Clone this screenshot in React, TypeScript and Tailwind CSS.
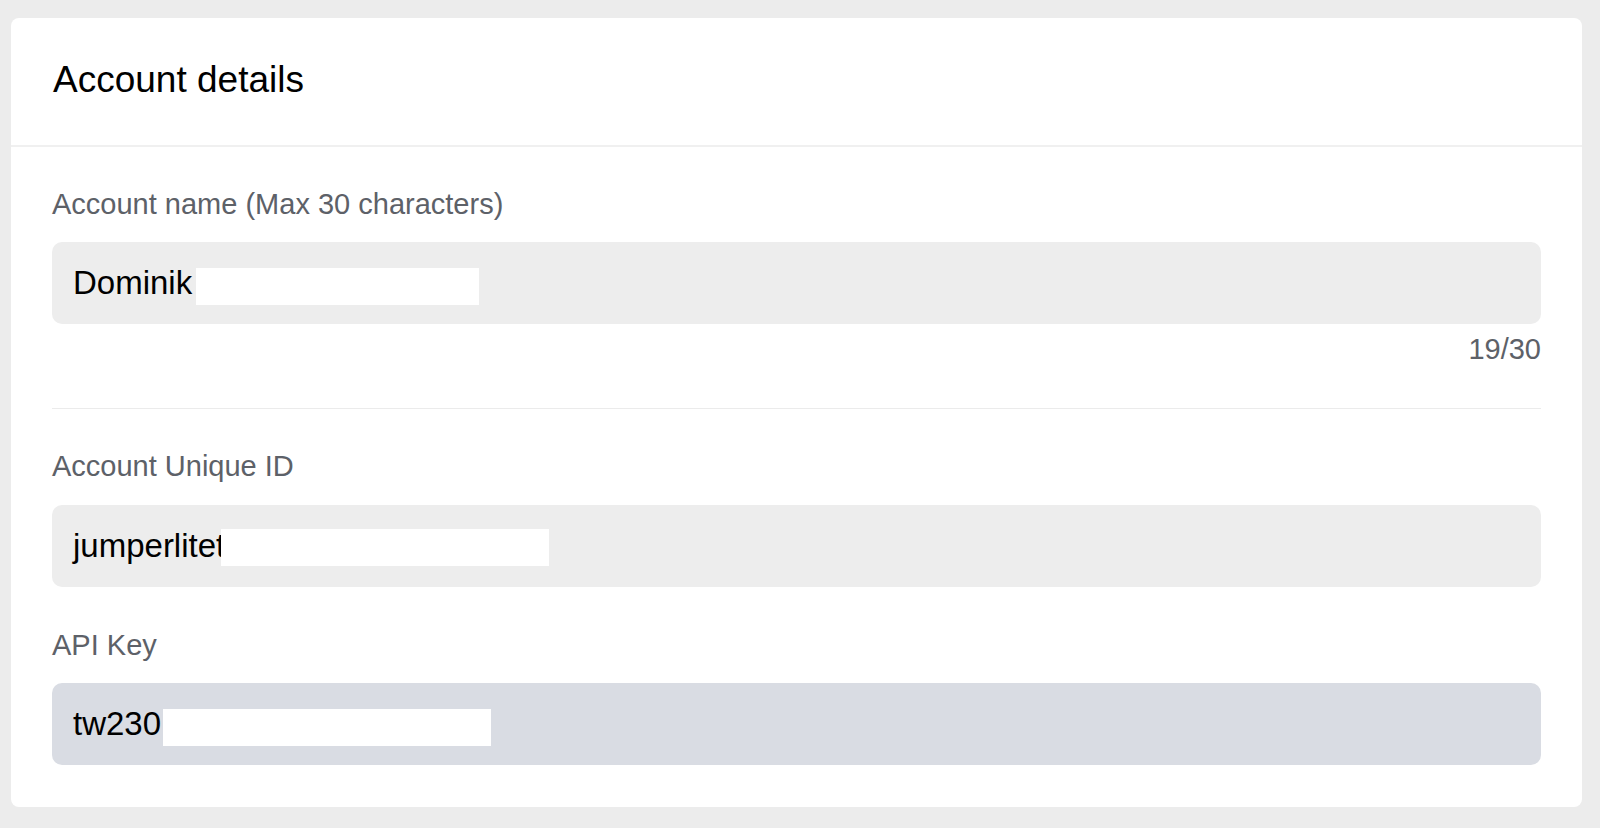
export default function App() {
  return (
    <div className="min-h-screen w-full bg-[#ececec] pl-[11px] pr-[18px] pt-[18px] pb-[21px] font-['Liberation_Sans',Arial,sans-serif]">
      <div className="bg-white rounded-[8px]">
        {/* Header */}
        <header className="px-[42px] pt-[35px] pb-[38px] border-b-2 border-[#f0f0f0]">
          <h1 className="text-[37px] leading-[54px] text-black font-normal">Account details</h1>
        </header>

        {/* Body */}
        <div className="px-[41px] pt-[36px] pb-[42px]">
          <label className="block text-[29px] leading-[42px] text-[#5d6168]">
            Account name (Max 30 characters)
          </label>
          <div className="relative mt-[17px] h-[82px] rounded-[10px] bg-[#ededed] pl-[21px] flex items-center">
            <span className="text-[33px] text-black">Dominik</span>
            <span className="absolute left-[144px] top-[26px] w-[283px] h-[37px] bg-white" />
          </div>
          <div className="mt-[4px] text-right text-[29px] leading-[42px] text-[#5d6168]">19/30</div>

          <div className="mt-[38px] h-px bg-[#ebebeb]" />

          <label className="block mt-[36px] text-[29px] leading-[42px] text-[#5d6168]">
            Account Unique ID
          </label>
          <div className="relative mt-[18px] h-[82px] rounded-[10px] bg-[#ededed] pl-[21px] flex items-center">
            <span className="text-[33px] text-black">jumperlitetech</span>
            <span className="absolute left-[169px] top-[24px] w-[328px] h-[37px] bg-white" />
          </div>

          <label className="block mt-[37px] text-[29px] leading-[42px] text-[#5d6168]">API Key</label>
          <div className="relative mt-[17px] h-[82px] rounded-[10px] bg-[#d9dce3] pl-[21px] flex items-center">
            <span className="text-[33px] text-black">tw230</span>
            <span className="absolute left-[111px] top-[26px] w-[328px] h-[37px] bg-white" />
          </div>
        </div>
      </div>
    </div>
  )
}
